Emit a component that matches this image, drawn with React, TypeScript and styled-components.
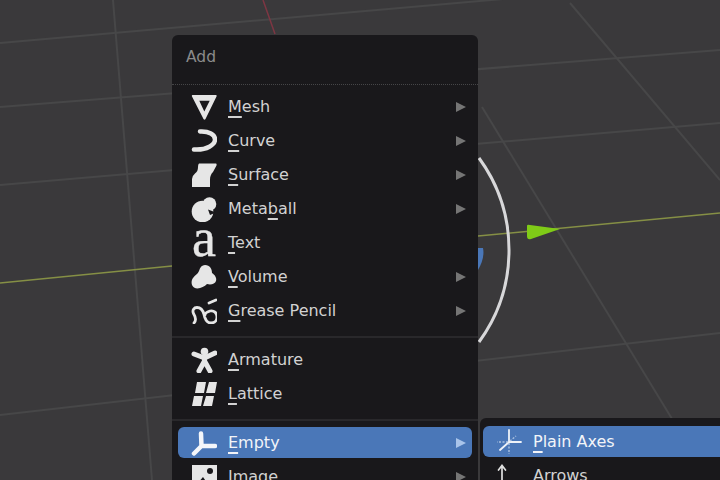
import styled, { createGlobalStyle } from "styled-components";
import type { ReactNode } from "react";

const GlobalStyle = createGlobalStyle`
  html, body {
    margin: 0;
    padding: 0;
    background: #3a393b;
  }
`;

const Viewport = styled.div`
  position: relative;
  width: 720px;
  height: 480px;
  overflow: hidden;
  background: #3a393b;
  font-family: "DejaVu Sans", sans-serif;
`;

const Scene = styled.svg`
  position: absolute;
  inset: 0;
`;

const Menu = styled.div`
  position: absolute;
  left: 172px;
  top: 35px;
  width: 306px;
  box-sizing: border-box;
  padding: 0 6px;
  background: #19181b;
  border-radius: 6px 6px 0 0;
  display: flex;
  flex-direction: column;
`;

const SubMenu = styled(Menu)`
  left: 480px;
  top: 418px;
  width: 260px;
  padding: 2px 3px 0;
`;

const MenuTitle = styled.div`
  height: 50px;
  margin: 0 -6px;
  padding: 0 0 6px 14px;
  box-sizing: border-box;
  display: flex;
  align-items: center;
  font-size: 15.5px;
  color: #8a8a8a;
  border-bottom: 1px dotted #454547;
`;

const Section = styled.div`
  padding: 4.5px 0 8.5px;
  display: flex;
  flex-direction: column;
`;

const Divider = styled.div`
  height: 2px;
  margin: 0 -6px;
  background: #29282b;
`;

const Row = styled.div<{ $active?: boolean }>`
  height: 31px;
  margin: 1.5px 0;
  display: flex;
  align-items: center;
  padding: 0 6px 0 13px;
  gap: 11px;
  border-radius: 6px;
  color: ${(p) => (p.$active ? "#f2f4f8" : "#d2d2d2")};
  background: ${(p) => (p.$active ? "#4a77b8" : "transparent")};
  font-size: 16px;
`;

const IconBox = styled.svg`
  width: 26px;
  height: 26px;
  flex: none;
`;

const TextGlyph = styled.span`
  width: 26px;
  height: 26px;
  flex: none;
  display: flex;
  justify-content: center;
  align-items: flex-start;
  line-height: 16px;
  font-family: "Liberation Serif", serif;
  font-size: 54px;
  color: #e6e6e6;
  -webkit-text-stroke: 0.4px #e6e6e6;
`;

const Label = styled.span`
  flex: 1;
  white-space: nowrap;
`;

const Mnemonic = styled.span`
  text-decoration: underline;
  text-decoration-thickness: 1.5px;
  text-underline-offset: 4px;
`;

const Arrow = styled.span<{ $active?: boolean }>`
  width: 0;
  height: 0;
  border-style: solid;
  border-width: 5px 0 5px 10px;
  border-color: transparent transparent transparent
    ${(p) => (p.$active ? "#a9c4ea" : "#757575")};
`;

const Icon = ({ children }: { children: ReactNode }) => (
  <IconBox viewBox="0 0 26 26" fill="#e6e6e6">
    {children}
  </IconBox>
);

const MeshIcon = () => (
  <Icon>
    <path
      d="M1.500 1H25q1 0 .5 1.500L14.500 25q-1 1.500-2 0L1 2.500Q.5 1 1.500 1zM8.300 6.800l5 10.800 5.400-10.800z"
      fillRule="evenodd"
    />
  </Icon>
);
const CurveIcon = () => (
  <Icon>
    <path
      d="M9 3.500c9-.5 15 3 15 8s-8 11-21 10"
      fill="none"
      stroke="#e6e6e6"
      strokeWidth="4.500"
      strokeLinecap="round"
    />
  </Icon>
);
const SurfaceIcon = () => (
  <Icon>
    <path d="M8 1.500h17q1 0 .5 2L22 10q-3 3-3 7.500V25H1v-8q0-3 3-5.500 3-2 3-6.500 0-3 1-3.500z" />
  </Icon>
);
const MetaballIcon = () => (
  <Icon>
    <circle cx="18.500" cy="8" r="6.800" />
    <circle cx="11.500" cy="15.500" r="10.800" />
    <path d="M17 13.500l8 3-6 2.500z" fill="#19181b" />
  </Icon>
);
const VolumeIcon = () => (
  <Icon>
    <path d="M14 1c5 0 7 4 7 8 3 2 5 5 4 8-1 3-5 4-9 3-3 3-9 6-13 3.500-3-2-3-7-1-9.500 2-3 5-4 6-7 1-4 3-6 6-6z" />
  </Icon>
);
const GreaseIcon = () => (
  <Icon>
    <path
      d="M3 25c3-3 1-7-.5-9.500C1 12 3 9.500 6 9.500c4 0 6 3 7 7 1 5 3 8.500 7 8.500s6-3 6-6c0-4-3-7-7-6-3 1-5 2-5 4M18 5l7-3"
      fill="none"
      stroke="#e6e6e6"
      strokeWidth="2.800"
      strokeLinecap="round"
    />
  </Icon>
);
const ArmatureIcon = () => (
  <Icon>
    <circle cx="13.500" cy="4.500" r="3.800" />
    <path
      d="M3 7l10.500 4L24 6M13.500 9v5L8 24M13.500 14l5.500 10"
      fill="none"
      stroke="#e6e6e6"
      strokeWidth="5"
      strokeLinecap="round"
      strokeLinejoin="round"
    />
  </Icon>
);
const LatticeIcon = () => (
  <Icon>
    <path d="M6 1h9l-2 11H4zM18 1h8l-2 11h-9zM3 15h9l-2 10H1zM15 15h8l-2 10h-9z" />
  </Icon>
);
const EmptyIcon = () => (
  <Icon>
    <path
      d="M10 3.500l.5 12.500L3 23.500M10.500 16H24"
      fill="none"
      stroke="#f4f6fa"
      strokeWidth="4.500"
      strokeLinecap="round"
      strokeLinejoin="round"
    />
  </Icon>
);
const ImageIcon = () => (
  <Icon>
    <path d="M1 1h25v25H1z" />
    <path d="M1 26l11-13 9 13z" fill="#19181b" />
    <circle cx="19" cy="7" r="3" fill="#19181b" />
  </Icon>
);
const PlainAxesIcon = () => (
  <Icon>
    <path
      d="M13 1v12M13 13h12M13 13l-9 8"
      fill="none"
      stroke="#eef2f8"
      strokeWidth="1.800"
      strokeLinecap="round"
    />
    <path
      d="M13 14v11M12 13H1M14 12l6-5"
      fill="none"
      stroke="#c3d3ea"
      strokeWidth="1.400"
      strokeDasharray="2 1.500"
      opacity="0.8"
    />
  </Icon>
);
const ArrowsIcon = () => (
  <Icon>
    <path
      d="M6 21V3M2.500 7L6 2.500 9.500 7M8 21h14M19 18l4 3-4 3"
      fill="none"
      stroke="#e0e0e0"
      strokeWidth="1.700"
      strokeLinecap="round"
    />
  </Icon>
);

type Item = { before: string; key: string; after: string; icon: ReactNode; more?: boolean };

const geometry: Item[] = [
  { before: "", key: "M", after: "esh", icon: <MeshIcon />, more: true },
  { before: "", key: "C", after: "urve", icon: <CurveIcon />, more: true },
  { before: "", key: "S", after: "urface", icon: <SurfaceIcon />, more: true },
  { before: "Meta", key: "b", after: "all", icon: <MetaballIcon />, more: true },
  { before: "", key: "T", after: "ext", icon: <TextGlyph>a</TextGlyph> },
  { before: "", key: "V", after: "olume", icon: <VolumeIcon />, more: true },
  { before: "", key: "G", after: "rease Pencil", icon: <GreaseIcon />, more: true },
];

const rigging: Item[] = [
  { before: "", key: "A", after: "rmature", icon: <ArmatureIcon /> },
  { before: "", key: "L", after: "attice", icon: <LatticeIcon /> },
];

const MenuRow = ({ item, active }: { item: Item; active?: boolean }) => (
  <Row $active={active}>
    {item.icon}
    <Label>
      {item.before}
      <Mnemonic>{item.key}</Mnemonic>
      {item.after}
    </Label>
    {item.more && <Arrow $active={active} />}
  </Row>
);

const App = () => (
  <Viewport>
    <GlobalStyle />
    <Scene width="720" height="480" viewBox="0 0 720 480" fill="none">
      <g stroke="#474748" strokeWidth="2">
        <path d="M0 43L720 -20" />
        <path d="M0 107L720 50" />
        <path d="M0 185L720 123" />
        <path d="M0 415L720 333" />
        <path d="M113 0L152 480" />
        <path d="M482 107L680 432" />
        <path d="M570 3L720 180" />
      </g>
      <path d="M263 0L275 34" stroke="#7d3643" strokeWidth="1.500" />
      <path d="M0 283L172 266" stroke="#858f45" strokeWidth="1.500" />
      <path d="M478 236L720 213" stroke="#858f45" strokeWidth="1.500" />
      <path d="M527 226Q527 224 530 225L560 229L531 239Q527 240 527 236Z" fill="#7fcb17" />
      <path d="M479 158A156 156 0 0 1 479 342" stroke="#d8d8da" strokeWidth="3" />
      <path d="M478 248H483Q485 258 478 270Z" fill="#4a77b8" />
    </Scene>
    <Menu>
      <MenuTitle>Add</MenuTitle>
      <Section>
        {geometry.map((item) => (
          <MenuRow key={item.key} item={item} />
        ))}
      </Section>
      <Divider />
      <Section>
        {rigging.map((item) => (
          <MenuRow key={item.key} item={item} />
        ))}
      </Section>
      <Divider />
      <Section>
        <MenuRow
          active
          item={{ before: "", key: "E", after: "mpty", icon: <EmptyIcon />, more: true }}
        />
        <MenuRow
          item={{ before: "", key: "I", after: "mage", icon: <ImageIcon />, more: true }}
        />
      </Section>
    </Menu>
    <SubMenu>
      <Section>
        <MenuRow
          active
          item={{ before: "", key: "P", after: "lain Axes", icon: <PlainAxesIcon /> }}
        />
        <MenuRow item={{ before: "", key: "A", after: "rrows", icon: <ArrowsIcon /> }} />
      </Section>
    </SubMenu>
  </Viewport>
);

export default App;
